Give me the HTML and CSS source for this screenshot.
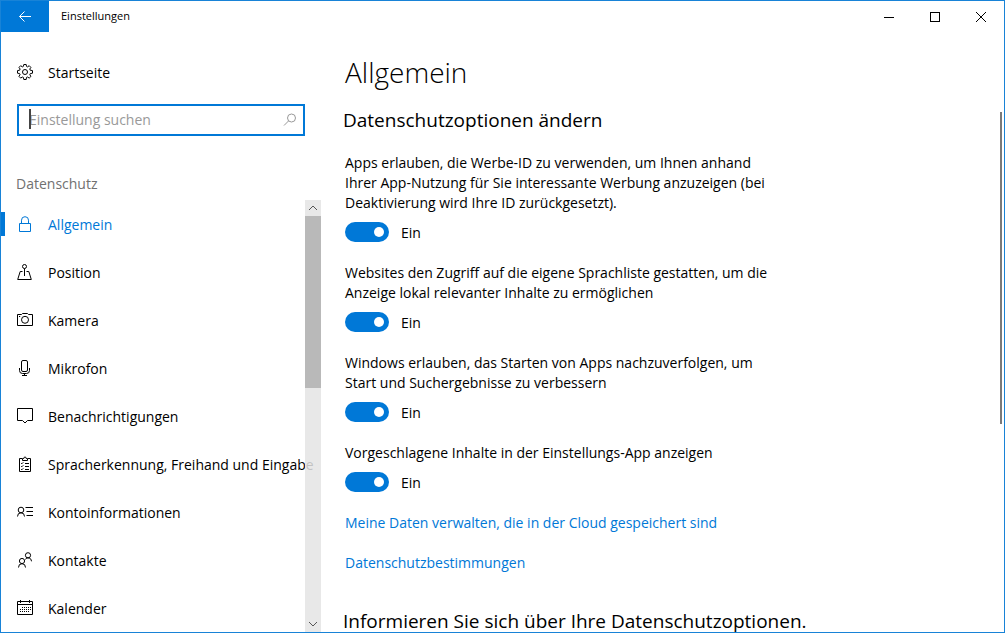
FILE: index.html
```html
<!DOCTYPE html>
<html lang="de">
<head>
  <meta charset="UTF-8" />
  <meta name="viewport" content="width=device-width, initial-scale=1.0" />
  <title>Einstellungen</title>
  <link rel="stylesheet" href="styles.css">
</head>
<body>
  <div class="window">
    <header class="titlebar">
      <button class="back" aria-label="Zurück">
        <svg width="14" height="12" viewBox="0 0 14 12"><path d="M13 5.5H1.5M6.5 .5l-5 5 5 5" /></svg>
      </button>
      <span class="title">Einstellungen</span>
      <div class="controls">
        <button aria-label="Minimieren">
          <svg class="crisp" width="10" height="10" viewBox="0 0 10 10"><path d="M0 5.5h10" /></svg>
        </button>
        <button aria-label="Maximieren">
          <svg class="crisp" width="10" height="10" viewBox="0 0 10 10"><path d="M.5.5h9v9h-9z" /></svg>
        </button>
        <button aria-label="Schließen">
          <svg width="10" height="10" viewBox="0 0 10 10"><path d="M0 0l10 10M10 0L0 10" /></svg>
        </button>
      </div>
    </header>

    <div class="body">
      <aside class="sidebar">
        <a class="item" href="#">
          <svg width="16" height="16" viewBox="0 0 16 16"><path d="M6.8.5h2.4l.3 1.9 1.1.5 1.6-1.2 1.7 1.7-1.1 1.6.4 1.2 2.3.4v2.6l-2.2.4-.5 1.2 1.2 1.5-1.8 1.8-1.6-1.1-1.1.4-.3 2.1H6.8l-.4-2.1-1.1-.4-1.6 1.1-1.8-1.8 1.2-1.5-.5-1.2-2.1-.4V6.6l2.2-.4.4-1.2L2 3.4l1.7-1.7 1.6 1.2 1.1-.5z" /><circle cx="8" cy="8" r="2.5" /></svg>
          <span>Startseite</span>
        </a>
        <div class="search">
          <input type="text" placeholder="Einstellung suchen" aria-label="Einstellung suchen">
          <span class="caret"></span>
          <svg width="14" height="14" viewBox="0 0 14 14"><circle cx="8.5" cy="5" r="4" /><path d="M5.6 7.9L1 12.5" /></svg>
        </div>
        <h2 class="group">Datenschutz</h2>
        <div class="list">
          <nav>
            <a class="item active" href="#">
              <svg width="16" height="16" viewBox="0 0 16 16"><path d="M2.5 7.5h11v8h-11zM4.5 7.5V4.2a3.5 3.5 0 0 1 7 0v3.3" /></svg>
              <span>Allgemein</span>
            </a>
            <a class="item" href="#">
              <svg width="16" height="16" viewBox="0 0 16 16"><circle cx="7.5" cy="2.5" r="2" /><path d="M7.5 4.5v7.5M5.5 7.5H3.2L.7 15.5h13.6l-2.5-8H9.5" /></svg>
              <span>Position</span>
            </a>
            <a class="item" href="#">
              <svg width="16" height="16" viewBox="0 0 16 16"><path d="M.5 2.5h4l1-1h5l1 1h4v11H.5zM2 4.5h1.2" /><circle cx="8" cy="7.8" r="3.5" /></svg>
              <span>Kamera</span>
            </a>
            <a class="item" href="#">
              <svg width="16" height="16" viewBox="0 0 16 16"><rect x="4.5" y=".5" width="6" height="11" rx="1.5" /><path d="M2.5 8v2.5a3 3 0 0 0 3 3h4a3 3 0 0 0 3-3V8M7.5 13.5v2M5 15.5h5" /></svg>
              <span>Mikrofon</span>
            </a>
            <a class="item" href="#">
              <svg width="16" height="16" viewBox="0 0 16 16"><path d="M.5.5h15v12h-5L8 15l-2.5-2.5h-5z" /></svg>
              <span>Benachrichtigungen</span>
            </a>
            <a class="item" href="#">
              <svg width="16" height="16" viewBox="0 0 16 16"><path d="M5 2.5H2.5v13h11v-13H11M5.5 4.5v-2h1.3a1.2 1.5 0 0 1 2.4 0h1.3v2zM8 7.5h4M8 10.5h4M8 13.5h4M4 7l.8.8L6.3 6.3M4 10l.8.8 1.5-1.5M4 13l.8.8 1.5-1.5" /></svg>
              <span>Spracherkennung, Freihand und Eingabe</span>
            </a>
            <a class="item" href="#">
              <svg width="16" height="16" viewBox="0 0 16 16"><circle cx="4" cy="6" r="2.8" /><path d="M.5 12.5a3.5 3.7 0 0 1 7 0M8.5 3.5H16M9.5 7.5H16M9.5 11.5H16" /></svg>
              <span>Kontoinformationen</span>
            </a>
            <a class="item" href="#">
              <svg width="16" height="16" viewBox="0 0 16 16"><circle cx="11" cy="3.3" r="2.6" /><path d="M8.3 7.3a3.4 3.4 0 0 1 6.2 2" /><circle cx="5" cy="9" r="2.6" /><path d="M1.5 15.5a3.5 3.8 0 0 1 7 0" /></svg>
              <span>Kontakte</span>
            </a>
            <a class="item" href="#">
              <svg width="16" height="16" viewBox="0 0 16 16"><path d="M.5 1.5h15v13H.5zM.5 4.5h15M3.5 0v3M12.5 0v3" /><path d="M5 7.5h9M3 9.5h11M3 11.5h9" stroke-dasharray="1 1" /></svg>
              <span>Kalender</span>
            </a>
          </nav>
          <div class="scrollbar">
            <button aria-label="Nach oben">
              <svg width="10" height="6" viewBox="0 0 10 6"><path d="M1 5l4-4 4 4" /></svg>
            </button>
            <div class="track"><div class="thumb"></div></div>
            <button aria-label="Nach unten">
              <svg width="10" height="6" viewBox="0 0 10 6"><path d="M1 1l4 4 4-4" /></svg>
            </button>
          </div>
        </div>
      </aside>

      <main class="content">
        <h1>Allgemein</h1>
        <h2>Datenschutzoptionen ändern</h2>
        <div class="option">
          <p id="werbung">Apps erlauben, die Werbe-ID zu verwenden, um Ihnen anhand Ihrer App-Nutzung für Sie interessante Werbung anzuzeigen (bei Deaktivierung wird Ihre ID zurückgesetzt).</p>
          <label><input type="checkbox" role="switch" aria-describedby="werbung" checked>Ein</label>
        </div>
        <div class="option">
          <p id="sprache">Websites den Zugriff auf die eigene Sprachliste gestatten, um die Anzeige lokal relevanter Inhalte zu ermöglichen</p>
          <label><input type="checkbox" role="switch" aria-describedby="sprache" checked>Ein</label>
        </div>
        <div class="option">
          <p id="starten">Windows erlauben, das Starten von Apps nachzuverfolgen, um Start und Suchergebnisse zu verbessern</p>
          <label><input type="checkbox" role="switch" aria-describedby="starten" checked>Ein</label>
        </div>
        <div class="option">
          <p id="inhalte">Vorgeschlagene Inhalte in der Einstellungs-App anzeigen</p>
          <label><input type="checkbox" role="switch" aria-describedby="inhalte" checked>Ein</label>
        </div>
        <a class="link" href="#">Meine Daten verwalten, die in der Cloud gespeichert sind</a>
        <a class="link" href="#">Datenschutzbestimmungen</a>
        <h2 class="more">Informieren Sie sich über Ihre Datenschutzoptionen.</h2>
        <div class="page-thumb"></div>
      </main>
    </div>
  </div>
</body>
</html>
```
FILE: styles.css
```css
* {
  margin: 0;
  padding: 0;
  box-sizing: border-box;
}
body {
  font-family: 'Segoe UI', 'Open Sans', 'Noto Sans', sans-serif;
  font-size: 14px;
  line-height: 20px;
  color: #000;
  background: #fff;
}
a {
  color: inherit;
  text-decoration: none;
}
button {
  display: flex;
  align-items: center;
  justify-content: center;
  border: none;
  background: none;
}
svg {
  flex: none;
  fill: none;
  stroke: currentColor;
}
.crisp {
  shape-rendering: crispEdges;
}
.window {
  display: flex;
  flex-direction: column;
  height: 100vh;
  border: 1px solid #1883d7;
  overflow: hidden;
}

/* title bar */
.titlebar {
  display: flex;
  align-items: center;
  height: 31px;
  flex: none;
}
.back {
  width: 48px;
  height: 31px;
  background: #0078d7;
  color: #fff;
}
.title {
  margin-left: 12px;
  padding-bottom: 2px;
  font-size: 11px;
}
.controls {
  display: flex;
  margin-left: auto;
}
.controls button {
  width: 46px;
  height: 31px;
  color: #000;
}

.body {
  display: flex;
  flex: 1;
  min-height: 0;
}

/* left column */
.sidebar {
  display: flex;
  flex-direction: column;
  width: 320px;
  flex: none;
  padding-top: 16px;
}
.item {
  display: flex;
  align-items: center;
  gap: 15px;
  height: 48px;
  padding-left: 16px;
  white-space: nowrap;
}
.item span {
  padding-top: 2px;
}
.item.active {
  position: relative;
  color: #0078d7;
}
.item.active::before {
  content: '';
  position: absolute;
  left: 0;
  top: 12px;
  width: 4px;
  height: 24px;
  background: #0078d7;
}
.search {
  position: relative;
  display: flex;
  align-items: center;
  height: 32px;
  margin: 8px 16px 0;
  padding: 0 6px 0 10px;
  border: 2px solid #0078d7;
  color: #999;
}
.search input {
  flex: 1;
  min-width: 0;
  border: none;
  outline: none;
  background: none;
  font: inherit;
  color: #000;
}
.search input::placeholder {
  color: #999;
}
.caret {
  position: absolute;
  left: 10px;
  top: 3px;
  width: 2px;
  height: 20px;
  background: #444;
}
.group {
  margin: 38px 15px 6px;
  font-size: 14px;
  font-weight: 400;
  color: #717171;
}
.list {
  position: relative;
  flex: 1;
  min-height: 0;
  overflow: hidden;
}
.scrollbar {
  position: absolute;
  top: 0;
  right: 0;
  bottom: 0;
  display: flex;
  flex-direction: column;
  width: 16px;
  background: rgba(228, 228, 228, 0.85);
}
.scrollbar button {
  height: 16px;
  color: #555;
}
.track {
  flex: 1;
}
.thumb {
  height: 43%;
  background: #b9b9b9;
}

/* right column */
.content {
  position: relative;
  flex: 1;
  min-width: 0;
  padding: 20px 24px 0;
  overflow: hidden;
}
h1 {
  font-size: 28px;
  font-weight: 300;
  line-height: 40px;
}
.content h2 {
  margin: 18px 0 23px -2px;
  font-size: 19px;
  font-weight: 400;
  line-height: 20px;
}
.option {
  max-width: 440px;
  margin-bottom: 19px;
}
.option label {
  display: flex;
  align-items: flex-start;
  gap: 12px;
  width: max-content;
  margin-top: 9px;
  line-height: 22px;
}
.option input {
  appearance: none;
  display: flex;
  align-items: center;
  justify-content: flex-end;
  width: 44px;
  height: 20px;
  padding-right: 5px;
  border-radius: 10px;
  background: #0078d7;
}
.option input::before {
  content: '';
  width: 10px;
  height: 10px;
  border-radius: 50%;
  background: #fff;
}
.option input:not(:checked) {
  justify-content: flex-start;
  padding-left: 5px;
  background: #999;
}
.link {
  display: block;
  width: max-content;
  margin-bottom: 20px;
  color: #0078d7;
}
.content .more {
  margin-top: 38px;
}
.page-thumb {
  position: absolute;
  top: 80px;
  right: 2px;
  width: 2px;
  height: 52%;
  background: #7a7a7a;
}
```
